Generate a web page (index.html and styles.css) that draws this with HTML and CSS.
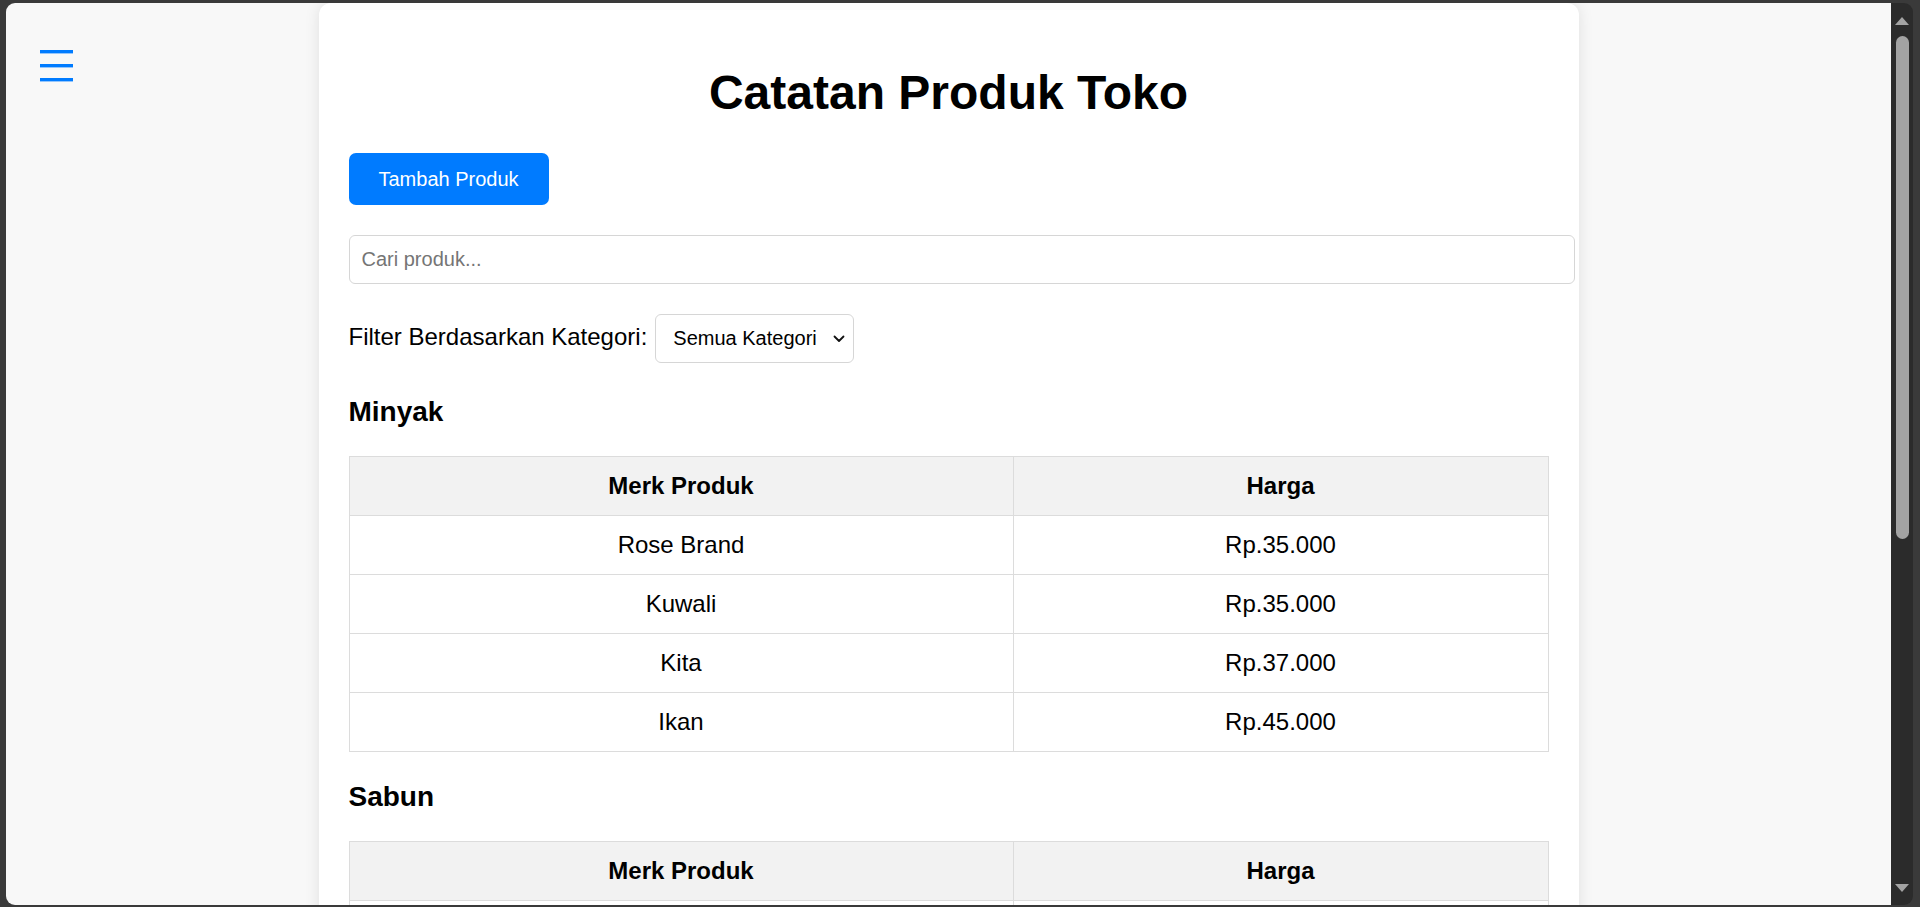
FILE: index.html
```html
<!DOCTYPE html>
<html lang="id">
<head>
<meta charset="utf-8">
<title>Catatan Produk Toko</title>
<link rel="stylesheet" href="styles.css">
</head>
<body>
<div class="window">
  <div class="viewport">
    <button class="menu-toggle" type="button" aria-label="Menu">
      <svg width="33" height="32" viewBox="0 0 33 32"><rect x="0" y="0" width="33" height="3.4" fill="#007bff"/><rect x="0" y="14" width="33" height="3.4" fill="#007bff"/><rect x="0" y="28" width="33" height="3.4" fill="#007bff"/></svg>
    </button>
    <main class="card">
      <h1 class="title">Catatan Produk Toko</h1>
      <button class="btn-add" type="button">Tambah Produk</button>
      <input class="search" type="text" placeholder="Cari produk...">
      <div class="filter">
        <label class="filter-label" for="kategori">Filter Berdasarkan Kategori:</label>
        <div class="select-wrap">
          <select id="kategori" class="select">
            <option>Semua Kategori</option>
            <option>Minyak</option>
            <option>Sabun</option>
          </select>
          <svg class="chevron" width="12" height="8" viewBox="0 0 12 8"><path d="M1.5 1.5 L6 6 L10.5 1.5" fill="none" stroke="#111" stroke-width="1.8" stroke-linecap="round" stroke-linejoin="round"/></svg>
        </div>
      </div>

      <section class="category">
        <h3 class="cat-title">Minyak</h3>
        <table class="products">
          <thead><tr><th class="col-name">Merk Produk</th><th>Harga</th></tr></thead>
          <tbody>
            <tr><td>Rose Brand</td><td>Rp.35.000</td></tr>
            <tr><td>Kuwali</td><td>Rp.35.000</td></tr>
            <tr><td>Kita</td><td>Rp.37.000</td></tr>
            <tr><td>Ikan</td><td>Rp.45.000</td></tr>
          </tbody>
        </table>
      </section>

      <section class="category">
        <h3 class="cat-title">Sabun</h3>
        <table class="products">
          <thead><tr><th class="col-name">Merk Produk</th><th>Harga</th></tr></thead>
          <tbody>
            <tr><td>Lifebuoy</td><td>Rp.5.000</td></tr>
            <tr><td>Lux</td><td>Rp.4.500</td></tr>
            <tr><td>Giv</td><td>Rp.3.500</td></tr>
          </tbody>
        </table>
      </section>
    </main>
  </div>
  <div class="scrollbar" aria-hidden="true">
    <div class="arrow-up"></div>
    <div class="thumb"></div>
    <div class="track-rest"></div>
    <div class="arrow-down"></div>
  </div>
</div>
</body>
</html>
```
FILE: styles.css
```css
* { box-sizing: border-box; }

html, body {
  margin: 0;
  height: 907px;
  overflow: hidden;
}

body {
  background: #3a3a3a;
  padding: 3px 7px 2px 6px;
  font-family: "Liberation Sans", Arial, sans-serif;
  color: #000;
}

.window {
  display: flex;
  height: 902px;
  border-radius: 9px;
  overflow: hidden;
}

.viewport {
  position: relative;
  flex: 1;
  background: #f8f8f8;
  overflow: hidden;
}

.menu-toggle {
  position: absolute;
  left: 34px;
  top: 47px;
  padding: 0;
  margin: 0;
  border: none;
  background: transparent;
  line-height: 0;
}

.card {
  display: block;
  width: 1260px;
  margin: 0 auto;
  background: #fff;
  padding: 30px;
  border-radius: 12px;
  box-shadow: 0 0 15px rgba(0, 0, 0, 0.1);
  min-height: 1400px;
}

.title {
  font-size: 48px;
  font-weight: bold;
  text-align: center;
  margin: 32px 0 33px;
  line-height: normal;
}

.btn-add {
  display: block;
  background: #007bff;
  color: #fff;
  border: none;
  border-radius: 7px;
  padding: 15px 30px 14px;
  font-family: "Liberation Sans", Arial, sans-serif;
  font-size: 20px;
  line-height: 23px;
  margin: 0 0 30px;
}

.search {
  display: block;
  width: 1226px;
  padding: 12px;
  border: 1px solid #d6d6d6;
  border-radius: 6px;
  font-family: "Liberation Sans", Arial, sans-serif;
  font-size: 20px;
  line-height: 23px;
  height: 49px;
  margin: 0 0 30px;
  color: #000;
  background: #fff;
}

.search::placeholder { color: #757575; }

.filter {
  display: flex;
  align-items: baseline;
  gap: 8px;
  margin-bottom: 33px;
}

.filter-label {
  font-size: 24px;
}

.select-wrap {
  position: relative;
  display: inline-block;
}

.select {
  appearance: none;
  -webkit-appearance: none;
  width: 199px;
  height: 49px;
  padding: 12px 28px 12px 17px;
  border: 1px solid #d6d6d6;
  border-radius: 6px;
  background: #fff;
  font-family: "Liberation Sans", Arial, sans-serif;
  font-size: 20px;
  line-height: 23px;
  color: #000;
}

.chevron {
  position: absolute;
  right: 9px;
  top: 21px;
  pointer-events: none;
}

.cat-title {
  font-size: 28px;
  font-weight: bold;
  margin: 28px 0;
  line-height: normal;
}

.products {
  width: 100%;
  border-collapse: collapse;
  margin-bottom: 29px;
  font-size: 24px;
}

.products th,
.products td {
  border: 1px solid #dcdcdc;
  padding: 15px;
  text-align: center;
  line-height: 28px;
}

.products th {
  background: #f2f2f2;
  font-weight: bold;
}

.products .col-name { width: 664px; }

.scrollbar {
  width: 22px;
  background: #2b2b2b;
  display: flex;
  flex-direction: column;
  align-items: center;
  padding: 14px 0 13px;
}

.arrow-up,
.arrow-down {
  width: 0;
  height: 0;
  border-left: 7px solid transparent;
  border-right: 7px solid transparent;
}

.arrow-up { border-bottom: 8px solid #a3a3a3; }
.arrow-down { border-top: 8px solid #a3a3a3; }

.thumb {
  width: 13px;
  height: 503px;
  margin-top: 11px;
  background: #a3a3a3;
  border-radius: 7px;
}

.track-rest { flex: 1; }
```
